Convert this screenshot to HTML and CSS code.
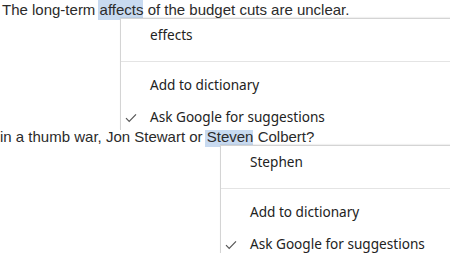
FILE: index.html
```html
<!DOCTYPE html>
<html>
<head>
<meta charset="utf-8">
<link rel="stylesheet" href="styles.css">
</head>
<body>
<div class="example">
  <p class="line first">The long-term <span class="hl">affects</span> of the budget cuts are unclear.</p>
  <div class="menu menu-a">
    <div class="item">effects</div>
    <div class="sep"></div>
    <div class="item">Add to dictionary</div>
    <div class="item last"><svg class="check" width="12" height="10" viewBox="0 0 12 10"><path d="M1 5.2 L4.2 8.4 L11 1.4" fill="none" stroke="#555" stroke-width="1.2"/></svg>Ask Google for suggestions</div>
  </div>
</div>
<div class="example">
  <p class="line second">in a thumb war, Jon Stewart or <span class="hl">Steven</span> Colbert?</p>
  <div class="menu menu-b">
    <div class="item">Stephen</div>
    <div class="sep"></div>
    <div class="item">Add to dictionary</div>
    <div class="item last"><svg class="check" width="12" height="10" viewBox="0 0 12 10"><path d="M1 5.2 L4.2 8.4 L11 1.4" fill="none" stroke="#555" stroke-width="1.2"/></svg>Ask Google for suggestions</div>
  </div>
</div>
</body>
</html>
```
FILE: styles.css
```css
html, body {
  margin: 0;
  padding: 0;
  background: #fff;
  overflow: hidden;
}
body {
  width: 450px;
  height: 253px;
  position: relative;
}
.example {
  position: relative;
  height: 127px;
}
.line {
  margin: 0;
  font-family: "Liberation Sans", Arial, sans-serif;
  font-size: 15px;
  line-height: 19px;
  color: #2b2b2b;
  white-space: nowrap;
}
.line.first { padding-left: 2px; }
.line.second { padding-left: 0; }
.hl {
  background: #c8daf0;
  padding: 1px 0 2px;
  margin-left: -2px;
  padding-left: 2px;
}
.menu {
  position: absolute;
  top: 18px;
  right: -10px;
  background: #fff;
  border: 1px solid #d4d4d4;
  border-bottom: none;
  box-shadow: 0 -1px 1px rgba(0,0,0,0.06);
  font-family: "Noto Sans", "Open Sans", sans-serif;
  font-size: 13.6px;
  color: #222;
  z-index: 1;
}
.menu-a { left: 120px; }
.menu-b { left: 220px; }
.item {
  position: relative;
  height: 32px;
  line-height: 32px;
  padding-left: 29px;
  white-space: nowrap;
}
.item.last {
  height: 29px;
  line-height: 32px;
}
.sep {
  height: 1px;
  background: #e4e4e4;
  margin: 10px 0 7px;
}
.check {
  position: absolute;
  left: 4px;
  top: 12px;
}
```
